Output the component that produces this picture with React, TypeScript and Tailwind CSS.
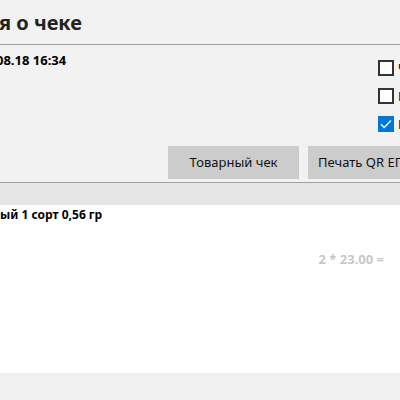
export default function App() {
  const font = { fontFamily: '"Noto Sans", "Open Sans", sans-serif' };
  return (
    <div
      className="w-[400px] h-[400px] overflow-hidden bg-[#f2f2f2] text-black flex flex-col"
      style={font}
    >
      {/* заголовок */}
      <div className="h-[45px] shrink-0 border-b border-[#a0a0a0]">
        <h1 className="ml-[-1px] pt-[9px] text-[20px] leading-[28px] font-bold text-[#222]">я о чеке</h1>
      </div>

      {/* информация о чеке */}
      <div className="h-[138px] shrink-0 border-b border-[#a0a0a0] flex flex-col">
        <div className="flex">
          <div className="ml-[-4px] pt-[6px] text-[13px] leading-[18px] font-bold whitespace-nowrap">08.18 16:34</div>
          <div className="ml-auto w-[22px] pt-[15px] flex flex-col gap-[12px]">
            <label className="h-[16px] flex items-center gap-[4px] whitespace-nowrap text-[13px] leading-[16px]">
              <span className="w-[16px] h-[16px] shrink-0 border-2 border-[#333] bg-white" />
              <span>Чек</span>
            </label>
            <label className="h-[16px] flex items-center gap-[4px] whitespace-nowrap text-[13px] leading-[16px]">
              <span className="w-[16px] h-[16px] shrink-0 border-2 border-[#333] bg-white" />
              <span>Печать</span>
            </label>
            <label className="h-[16px] flex items-center gap-[4px] whitespace-nowrap text-[13px] leading-[16px]">
              <span className="w-[16px] h-[16px] shrink-0 bg-[#0078d7] flex items-center justify-center">
                <svg width="12" height="10" viewBox="0 0 12 10" fill="none">
                  <path d="M1 5.2 L4.2 8.4 L11 1.4" stroke="white" strokeWidth="1.4" />
                </svg>
              </span>
              <span>Печать</span>
            </label>
          </div>
        </div>
        <div className="mt-[14px] pl-[168px] flex gap-[9px] whitespace-nowrap">
          <button className="w-[131px] h-[33px] shrink-0 bg-[#cccccc] text-[13px] text-[#111]">Товарный чек</button>
          <button className="w-[131px] h-[33px] shrink-0 bg-[#cccccc] text-[13px] text-[#111] text-left pl-[10px]">Печать QR ЕГАИС</button>
        </div>
      </div>

      {/* шапка таблицы */}
      <div className="h-[22px] shrink-0 bg-[#e6e6e6]" />

      {/* позиции */}
      <div className="h-[168px] shrink-0 bg-white">
        <div className="pt-[1px] text-[12px] leading-[18px] font-bold whitespace-nowrap">ый 1 сорт 0,56 гр</div>
        <div className="mt-[26px] pr-[16px] text-right text-[13px] leading-[18px] font-bold text-[#c8c8c8]">2 * 23.00 =</div>
      </div>

      <div className="flex-1 bg-[#f0f0f0]" />
    </div>
  );
}
